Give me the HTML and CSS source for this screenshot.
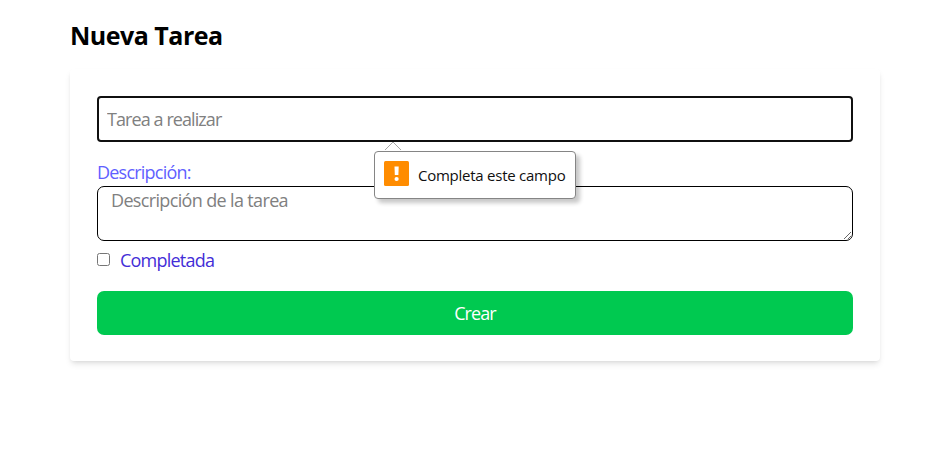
FILE: index.html
```html
<!DOCTYPE html>
<html lang="es">
<head>
<meta charset="utf-8">
<title>Nueva Tarea</title>
<link rel="stylesheet" href="styles.css">
</head>
<body>
<main class="page">
  <h1 class="title"><span>Nueva Tarea</span></h1>
  <form class="card" novalidate>
    <div class="field">
      <input class="name" type="text" placeholder="Tarea a realizar">
      <div class="tip" role="alert">
        <svg class="arrow" width="18" height="10" viewBox="0 0 18 10"><path d="M1 9 L9 1 L17 9" fill="#fff" stroke="#a8a8a8"/></svg>
        <svg class="warn" width="25" height="25" viewBox="0 0 25 25"><rect width="25" height="25" rx="1.5" fill="#ff8c00"/><path d="M10.5 5.5h4.2l-.3 8.5h-3.6z" fill="#fff"/><circle cx="12.6" cy="18" r="2.1" fill="#fff"/></svg>
        <span class="tip-text">Completa este campo</span>
      </div>
    </div>
    <label class="label" for="desc"><span>Descripción:</span></label>
    <textarea class="desc" id="desc" placeholder="Descripción de la tarea"></textarea>
    <label class="check"><input class="box" type="checkbox"><span class="check-text">Completada</span></label>
    <button class="submit" type="button"><span>Crear</span></button>
  </form>
</main>
</body>
</html>
```
FILE: styles.css
```css
* { box-sizing: border-box; }
body {
  margin: 0;
  min-height: 100vh;
  background: #fff;
  font: 18px/27px "Segoe UI", "Open Sans", "Noto Sans", sans-serif;
}
.page { width: 810px; min-height: 100vh; margin-left: 70px; padding-top: 17px; }
.title { margin: 0 0 16px; font-size: 25px; line-height: 36px; font-weight: 700; letter-spacing: -0.5px; }
.card {
  display: flex;
  flex-direction: column;
  padding: 27px 27px 26px;
  border-radius: 4px;
  background: #fff;
  box-shadow: 0 4px 6px -1px rgba(0,0,0,.1), 0 2px 4px -2px rgba(0,0,0,.1);
}
.field { position: relative; }
.name, .desc {
  display: block;
  width: 100%;
  margin: 0;
  background: #fff;
  font: inherit;
  outline: none;
}
.name { height: 46px; padding: 0 8px 1px; border: 2px solid #101010; border-radius: 4px; letter-spacing: -0.92px; }
.name::placeholder, .desc::placeholder { color: #808080; opacity: 1; }
.label { margin-top: 17px; color: #615fff; letter-spacing: -0.78px; }
.desc { height: 55px; padding: 0 13px; border: 1px solid #000; border-radius: 7px; letter-spacing: -0.65px; resize: vertical; }
.check { display: flex; align-items: center; margin-top: 6px; color: #432dd7; letter-spacing: -0.78px; }
.box { width: 13px; height: 13px; margin: 0 10px 2px 0; }
.submit {
  height: 44px;
  margin-top: 17px;
  padding: 0;
  border: 0;
  border-radius: 7px;
  background: #00c950;
  color: #fff;
  font: inherit;
  letter-spacing: -0.9px;
}
.tip {
  position: absolute;
  top: 55px;
  left: 277px;
  z-index: 1;
  display: flex;
  align-items: center;
  width: 202px;
  height: 48px;
  padding: 0 9px;
  border: 1px solid #858585;
  border-radius: 4px;
  background: #fff;
  box-shadow: 4px 4px 4px rgba(0,0,0,.22);
}
.arrow { position: absolute; top: -11px; left: 9px; }
.warn { flex: none; margin: 0 9px 3px 0; }
.tip-text { color: #101010; font-size: 15px; letter-spacing: -0.25px; white-space: nowrap; }
```
